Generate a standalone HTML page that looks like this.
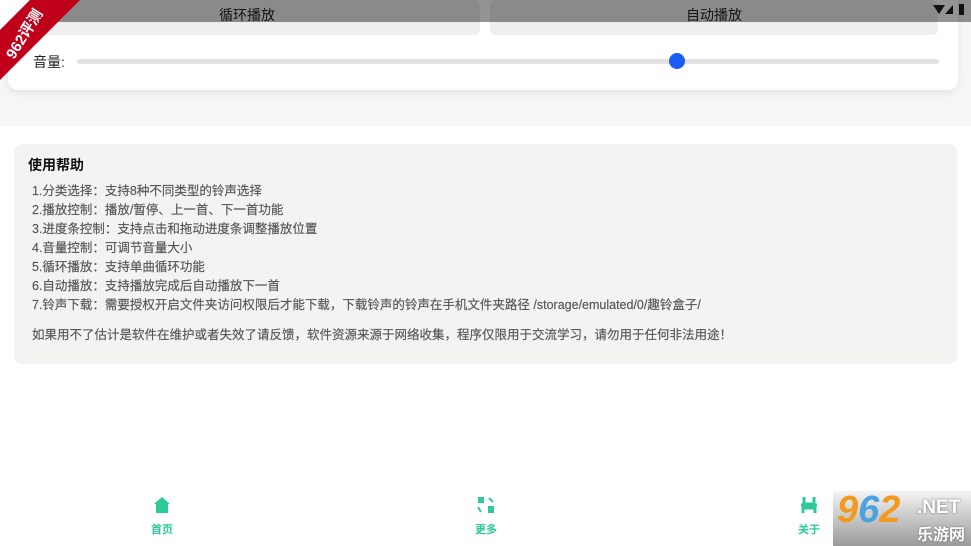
<!DOCTYPE html><html><head><meta charset="utf-8"><style>
body{margin:0;width:971px;height:546px;overflow:hidden;position:relative;background:#fff;font-family:"Liberation Sans","Noto Sans CJK SC",sans-serif}
.top{position:absolute;left:0;top:0;width:971px;height:126px;background:#f5f6f8}
.card{position:absolute;left:8px;top:-20px;width:950px;height:110px;background:#fff;border-radius:10px;box-shadow:0 3px 8px rgba(0,0,0,.08)}
.btn{position:absolute;top:0;height:35px;background:#eeeeee;border-radius:6px;font-size:14px;color:#222;text-align:center;line-height:30px}
.bar{position:absolute;left:0;top:0;width:971px;height:22px;background:rgba(0,0,0,.42)}
.help{position:absolute;left:14px;top:144px;width:943px;height:220px;background:#f3f4f1;border-radius:8px}
.help h3{margin:0;position:absolute;left:14px;top:11px;font-size:14px;font-weight:bold;color:#111}
.help .l{position:absolute;left:18px;top:38px;font-size:12.5px;color:#555;line-height:19px;-webkit-text-stroke:0.15px #555;white-space:nowrap}
.nav{position:absolute;top:521px;font-size:11px;color:#2ec99a;font-weight:bold}
.ic{position:absolute;top:494px;width:22px;height:22px}
</style></head><body>
<div class="top"></div>
<div class="card"></div>
<div class="btn" style="left:14px;width:466px;">循环播放</div>
<div class="btn" style="left:490px;width:448px;">自动播放</div>
<div class="bar"></div>
<div style="position:absolute;right:26px;top:5px;width:0;height:0;border-left:6px solid transparent;border-right:6px solid transparent;border-top:9px solid #111"></div>
<div style="position:absolute;right:18px;top:5px;width:0;height:0;border-left:8px solid transparent;border-bottom:9px solid #111"></div>
<div style="position:absolute;right:7px;top:4px;width:5px;height:11px;background:#111"></div>
<div style="position:absolute;left:33px;top:52px;font-size:14px;color:#222">音量:</div>
<div style="position:absolute;left:77px;top:59px;width:862px;height:5px;background:#e2e2e4;border-radius:3px"></div>
<div style="position:absolute;left:669px;top:53px;width:16px;height:16px;background:#1b5cf5;border-radius:50%"></div>
<svg style="position:absolute;left:0;top:0" width="82" height="82"><polygon points="0,0 30,0 0,30" fill="#fff"/><polygon points="30,0 80,0 0,80 0,30" fill="#c0001b"/><text x="0" y="0" transform="translate(14,60) rotate(-58)" font-size="15" font-weight="bold" fill="#fff" font-family="Liberation Sans,Noto Sans CJK SC,sans-serif">962评测</text></svg>
<div class="help"><h3>使用帮助</h3><div class="l">1.分类选择：支持8种不同类型的铃声选择<br>2.播放控制：播放/暂停、上一首、下一首功能<br>3.进度条控制：支持点击和拖动进度条调整播放位置<br>4.音量控制：可调节音量大小<br>5.循环播放：支持单曲循环功能<br>6.自动播放：支持播放完成后自动播放下一首<br>7.铃声下载：需要授权开启文件夹访问权限后才能下载，下载铃声的铃声在手机文件夹路径 /storage/emulated/0/趣铃盒子/<br><div style="height:11px"></div>如果用不了估计是软件在维护或者失效了请反馈，软件资源来源于网络收集，程序仅限用于交流学习，请勿用于任何非法用途！</div></div>
<svg class="ic" style="left:151px" viewBox="0 0 22 22"><path d="M3 10L11 3L19 10H17V19H5V10Z" fill="#2ec99a"/></svg>
<svg class="ic" style="left:475px" viewBox="0 0 22 22"><rect x="3" y="3" width="6" height="6" fill="#2ec99a"/><rect x="13" y="12" width="6" height="7" fill="#2ec99a"/><path d="M14 4l4 4M3 13l3 5" stroke="#2ec99a" stroke-width="2"/></svg>
<svg class="ic" style="left:798px" viewBox="0 0 22 22"><path d="M6 3v7h10V3M3 11h16M5 19v-5h12v5" stroke="#2ec99a" stroke-width="3" fill="none"/></svg>
<div class="nav" style="left:151px">首页</div>
<div class="nav" style="left:475px">更多</div>
<div class="nav" style="left:798px">关于</div>
<div style="position:absolute;left:833px;top:491px;width:138px;height:55px;background:linear-gradient(#f4f4f4,#9a9a9a);font-weight:bold">
<span style="position:absolute;left:4px;top:-2px;font-size:38px;color:#f39a1e;font-style:italic">9<span style="color:#4aa3e0">6</span>2</span>
<span style="position:absolute;left:84px;top:6px;font-size:19px;color:#fff;text-shadow:0 0 2px #666">.NET</span>
<span style="position:absolute;left:84px;top:30px;font-size:16px;color:#fff;text-shadow:0 0 2px #666">乐游网</span></div>
</body></html>
